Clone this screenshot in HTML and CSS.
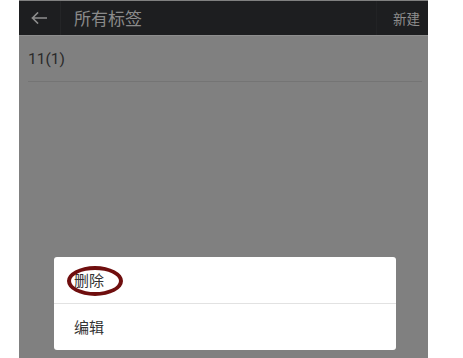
FILE: index.html
```html
<!DOCTYPE html>
<html lang="zh">
<head>
<meta charset="utf-8">
<title>所有标签</title>
<link rel="stylesheet" href="styles.css">
</head>
<body>
<div class="screen">
  <div class="topbar">
    <div class="back">
      <svg width="16" height="12" viewBox="0 0 16 12" aria-hidden="true">
        <path d="M15.5 6H1.5M6.5 1L1.5 6L6.5 11" fill="none" stroke="#8d8d8d" stroke-width="1.6" stroke-linecap="square"/>
      </svg>
    </div>
    <div class="title">所有标签</div>
    <div class="action">新建</div>
  </div>
  <div class="list">
    <div class="tag">11(1)</div>
  </div>
  <div class="dialog">
    <div class="item first">删除<span class="mark"></span></div>
    <div class="item">编辑</div>
  </div>
</div>
</body>
</html>
```
FILE: styles.css
```css
html, body {
  margin: 0;
  padding: 0;
  background: #ffffff;
}
body {
  font-family: "Noto Sans CJK SC", "Roboto", sans-serif;
}
.screen {
  position: relative;
  margin-left: 19px;
  width: 409px;
  height: 358px;
  background: #808080;
  display: flex;
  flex-direction: column;
}
.topbar {
  height: 34px;
  margin-top: 1px;
  background: #1d1e20;
  border-bottom: 1px solid #8e8e8e;
  display: flex;
  align-items: center;
}
.back {
  width: 42px;
  height: 34px;
  box-sizing: border-box;
  padding-left: 12px;
  display: flex;
  align-items: center;
  border-right: 1px solid #242527;
}
.back svg {
  display: block;
}
.title {
  flex: 1;
  padding-left: 13px;
  font-size: 17px;
  color: #8a8a8a;
  line-height: 34px;
}
.action {
  height: 34px;
  line-height: 34px;
  padding: 0 8px 0 16px;
  border-left: 1px solid #222325;
  font-size: 13.5px;
  color: #8e8e8e;
}
.list {
  padding: 0 6px 0 9px;
}
.tag {
  height: 45px;
  line-height: 46px;
  font-family: "Roboto", "Noto Sans CJK SC", sans-serif;
  font-size: 15.5px;
  color: #2a2a2a;
  border-bottom: 1px solid #747474;
}
.dialog {
  position: absolute;
  left: 35px;
  top: 257px;
  width: 342px;
  background: #ffffff;
  border-radius: 3px;
}
.item {
  position: relative;
  height: 46px;
  line-height: 46px;
  padding-left: 20px;
  font-size: 15px;
  color: #333333;
}
.item.first {
  border-bottom: 1px solid #e2e2e2;
}
.mark {
  position: absolute;
  left: 13px;
  top: 9px;
  width: 56px;
  height: 30px;
  box-sizing: border-box;
  border: 4px solid #6f0e0e;
  border-radius: 50%;
}
```
